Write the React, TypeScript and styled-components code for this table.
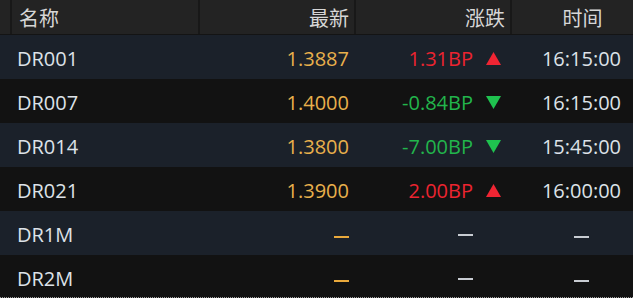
import React from "react";
import styled, { createGlobalStyle } from "styled-components";

const Global = createGlobalStyle`
  html, body { margin: 0; padding: 0; background: #121212; }
  body { font-family: "Open Sans", "Noto Sans CJK SC", sans-serif; }
`;

const Table = styled.div`
  width: 633px;
  height: 298px;
  background: #121212;
  overflow: hidden;
  box-sizing: border-box;
  border-bottom: 1px dotted #9a9a9a;
`;

const cols = "10px 188px 156px 156px 1fr";

const HeaderRow = styled.div`
  display: grid;
  grid-template-columns: ${cols};
  height: 34px;
  background: #232323;
  border-bottom: 1px solid #141414;
`;

const HeadCell = styled.div<{ $align: "left" | "right" | "center" }>`
  display: flex;
  align-items: center;
  justify-content: ${(p) =>
    p.$align === "left" ? "flex-start" : p.$align === "right" ? "flex-end" : "center"};
  padding: ${(p) =>
    p.$align === "left" ? "1px 0 0 7px" : p.$align === "right" ? "1px 5px 0 0" : "1px 0 0 20px"};
  border-left: 2px solid #181818;
  color: #d6d6d6;
  font-family: "Noto Sans CJK SC", sans-serif;
  font-size: 20px;
  line-height: 1;
  box-sizing: border-box;
`;

const Spacer = styled.div``;

const Row = styled.div<{ $alt: boolean }>`
  display: grid;
  grid-template-columns: ${cols};
  height: 44px;
  padding-top: 3px;
  box-sizing: border-box;
  align-items: center;
  background: ${(p) => (p.$alt ? "#1b212a" : "#121212")};
  font-size: 20px;
`;

const NameCell = styled.div`
  padding-left: 7px;
  color: #dde2e8;
`;

const PriceCell = styled.div`
  text-align: right;
  padding-right: 5px;
  color: #e9b04c;
`;

const ChangeCell = styled.div<{ $dir: "up" | "down" | "none" }>`
  display: flex;
  justify-content: flex-end;
  align-items: center;
  padding-right: 9px;
  color: ${(p) => (p.$dir === "up" ? "#ec2430" : p.$dir === "down" ? "#22b54c" : "#d8dce2")};
`;

const Arrow = styled.span`
  display: inline-flex;
  width: 15px;
  margin-left: 13px;
`;

const TimeCell = styled.div`
  text-align: center;
  padding-left: 20px;
  color: #dde2e8;
`;

const Dash = styled.span<{ $color: string }>`
  display: inline-block;
  width: 15px;
  height: 2px;
  background: ${(p) => p.$color};
  vertical-align: middle;
`;

type Item = {
  name: string;
  price?: string;
  change?: string;
  dir: "up" | "down" | "none";
  time?: string;
};

const data: Item[] = [
  { name: "DR001", price: "1.3887", change: "1.31BP", dir: "up", time: "16:15:00" },
  { name: "DR007", price: "1.4000", change: "-0.84BP", dir: "down", time: "16:15:00" },
  { name: "DR014", price: "1.3800", change: "-7.00BP", dir: "down", time: "15:45:00" },
  { name: "DR021", price: "1.3900", change: "2.00BP", dir: "up", time: "16:00:00" },
  { name: "DR1M", dir: "none" },
  { name: "DR2M", dir: "none" },
];

const Tri = ({ dir }: { dir: "up" | "down" }) => (
  <svg width="15" height="13" viewBox="0 0 15 13">
    {dir === "up" ? (
      <polygon points="7.5,0 15,13 0,13" fill="#f02533" />
    ) : (
      <polygon points="0,0 15,0 7.5,13" fill="#1fc24f" />
    )}
  </svg>
);

export default function App() {
  return (
    <>
      <Global />
      <Table>
        <HeaderRow>
          <Spacer />
          <HeadCell $align="left">名称</HeadCell>
          <HeadCell $align="right">最新</HeadCell>
          <HeadCell $align="right">涨跌</HeadCell>
          <HeadCell $align="center">时间</HeadCell>
        </HeaderRow>
        {data.map((d, i) => (
          <Row key={d.name} $alt={i % 2 === 0}>
            <Spacer />
            <NameCell>{d.name}</NameCell>
            <PriceCell>{d.price ?? <Dash $color="#e9a93c" />}</PriceCell>
            <ChangeCell $dir={d.dir}>
              {d.change ?? <Dash $color="#c8ccd2" />}
              <Arrow>{d.dir !== "none" && <Tri dir={d.dir} />}</Arrow>
            </ChangeCell>
            <TimeCell>{d.time ?? <Dash $color="#c8ccd2" />}</TimeCell>
          </Row>
        ))}
      </Table>
    </>
  );
}
